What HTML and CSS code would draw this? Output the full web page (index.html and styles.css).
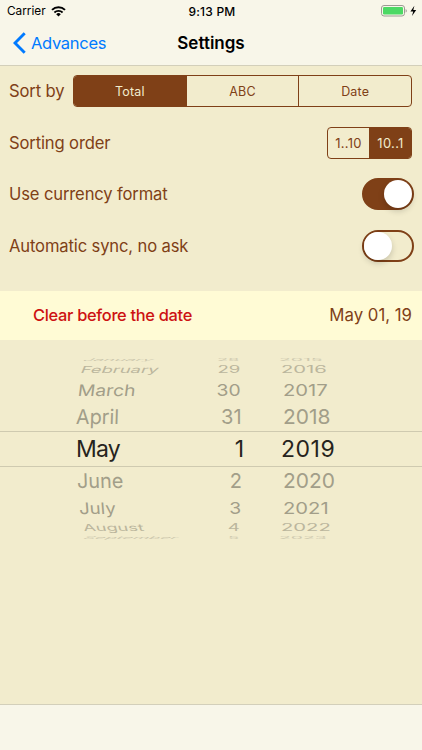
FILE: index.html
```html
<!DOCTYPE html>
<html lang="en">
<head>
    <meta charset="UTF-8">
    <meta name="viewport" content="width=device-width, initial-scale=1.0">
    <title>Settings</title>
    <link rel="stylesheet" href="styles.css">
</head>
<body>
    <header class="header">
        <div class="statusbar">
            <div class="carrier">
                <span>Carrier</span>
                <svg width="15" height="11" viewBox="0 0 15 11">
                    <path d="M1 3.9a9.4 9.4 0 0 1 13 0" fill="none" stroke="#000" stroke-width="2"/>
                    <path d="M3.4 6.5a6 6 0 0 1 8.2 0" fill="none" stroke="#000" stroke-width="1.8"/>
                    <path d="M7.5 10.6 5.2 8.2a3.3 3.3 0 0 1 4.6 0z"/>
                </svg>
            </div>
            <div class="time">9:13 PM</div>
            <div class="power">
                <svg width="36" height="12" viewBox="0 0 36 12">
                    <rect x=".5" y=".5" width="23" height="10.5" rx="2.5" fill="none" stroke="#9c9b93"/>
                    <rect x="2" y="2" width="20" height="7.5" rx="1.2" fill="#4cd964"/>
                    <path d="M24.6 3.9c1.6.5 1.6 3.2 0 3.7z" fill="#9c9b93"/>
                    <path d="M33.4.7 29.4 6.4h2.8l-1.2 4.6 4.2-6.1h-2.9z"/>
                </svg>
            </div>
        </div>
        <nav class="navbar">
            <a class="back">
                <svg width="13" height="22" viewBox="0 0 13 22">
                    <path d="M11.7 1.3 2 11l9.7 9.7" fill="none" stroke="#007aff" stroke-width="2.9"/>
                </svg>
                <span>Advances</span>
            </a>
            <h1>Settings</h1>
        </nav>
    </header>

    <main class="settings">
        <div class="row">
            <label>Sort by</label>
            <div class="segments wide">
                <button class="active">Total</button>
                <button>ABC</button>
                <button>Date</button>
            </div>
        </div>
        <div class="row">
            <label>Sorting order</label>
            <div class="segments small">
                <button>1..10</button>
                <button class="active">10..1</button>
            </div>
        </div>
        <div class="row">
            <label>Use currency format</label>
            <div class="switch on"></div>
        </div>
        <div class="row">
            <label>Automatic sync, no ask</label>
            <div class="switch"></div>
        </div>
    </main>

    <section class="clear">
        <span class="cleartext">Clear before the date</span>
        <span class="cleardate">May 01, 19</span>
    </section>

    <section class="picker">
        <div class="line far up"><span>January</span><span>28</span><span>2015</span></div>
        <div class="line third up"><span>February</span><span>29</span><span>2016</span></div>
        <div class="line second up"><span>March</span><span>30</span><span>2017</span></div>
        <div class="line first up"><span>April</span><span>31</span><span>2018</span></div>
        <div class="line selected"><span>May</span><span>1</span><span>2019</span></div>
        <div class="line first down"><span>June</span><span>2</span><span>2020</span></div>
        <div class="line second down"><span>July</span><span>3</span><span>2021</span></div>
        <div class="line third down"><span>August</span><span>4</span><span>2022</span></div>
        <div class="line far down"><span>September</span><span>5</span><span>2023</span></div>
    </section>

    <footer class="toolbar"></footer>
</body>
</html>
```

FILE: styles.css
```css
* {
    margin: 0;
    padding: 0;
    box-sizing: border-box;
}

body {
    font-family: Inter, "Liberation Sans", sans-serif;
    background: #f2eccd;
    display: flex;
    flex-direction: column;
    height: 750px;
    color: #7f4017;
    overflow: hidden;
}

svg {
    display: block;
}

/* Header */
.header {
    height: 66px;
    background: #f8f6e9;
    border-bottom: 1px solid #d3cfba;
    color: #000;
}

.statusbar {
    height: 22px;
    display: grid;
    grid-template-columns: 1fr 1fr 1fr;
    align-items: center;
    padding: 0 5px 0 7px;
    font-size: 11.8px;
}

.carrier {
    display: flex;
    align-items: center;
    gap: 5px;
}

.time {
    text-align: center;
    font-weight: 500;
    font-size: 12px;
    letter-spacing: 0.2px;
}

.power {
    display: flex;
    justify-content: flex-end;
}

.navbar {
    height: 42px;
    display: grid;
    grid-template-columns: 1fr auto 1fr;
    align-items: center;
    padding: 0 13px;
}

.back {
    display: flex;
    align-items: center;
    gap: 5px;
    color: #007aff;
    font-size: 16.5px;
    letter-spacing: -0.3px;
}

.navbar h1 {
    font-size: 17px;
    font-weight: 600;
}

/* Settings rows */
.settings {
    height: 225px;
    padding: 0 10px 0 9px;
}

.row {
    height: 51.5px;
    display: flex;
    align-items: center;
    justify-content: space-between;
    font-size: 16.6px;
    letter-spacing: -0.14px;
}

.row:first-child {
    height: 50.8px;
}

.segments {
    display: flex;
    height: 32px;
    border: 1px solid #7f4017;
    border-radius: 4px;
    overflow: hidden;
}

.segments button {
    flex: 1;
    border: none;
    border-left: 1px solid #7f4017;
    background: none;
    color: #7f4017;
    font-family: inherit;
    font-size: 12.5px;
    letter-spacing: 0.2px;
}

.segments button:first-child {
    border-left: none;
}

.segments .active {
    background: #7f4017;
    color: #f2eccd;
}

.wide {
    width: 339px;
}

.small {
    width: 85px;
}

.small button {
    font-size: 13px;
    letter-spacing: 0.3px;
}

.switch {
    width: 52px;
    height: 32px;
    margin-right: -2px;
    padding: 1px;
    border: 2px solid #7f4017;
    border-radius: 16px;
    display: flex;
}

.switch::before {
    content: "";
    width: 28px;
    height: 28px;
    margin: -1px;
    border-radius: 50%;
    background: #fff;
    box-shadow: 0 3px 6px rgba(0, 0, 0, 0.18);
}

.switch.on {
    background: #7f4017;
    justify-content: flex-end;
}

/* Clear row */
.clear {
    height: 48.5px;
    background: #fffbd5;
    display: flex;
    align-items: center;
    justify-content: space-between;
    padding: 0 10px 0 33px;
    font-size: 16.8px;
}

.cleartext {
    color: #cd1212;
    font-weight: 500;
    font-size: 16.4px;
    letter-spacing: -0.3px;
}

/* Date picker */
.picker {
    margin-top: 16.5px;
    height: 184px;
    overflow: hidden;
    display: flex;
    flex-direction: column;
    color: #a29e89;
    font-size: 23px;
}

.line {
    flex: none;
    display: grid;
    grid-template-columns: 148px 20px 1fr;
    align-items: center;
    padding-left: 76px;
}

.line span {
    line-height: 0;
    white-space: nowrap;
    justify-self: start;
    transform-origin: left center;
}

.line span:nth-child(2) {
    justify-self: end;
    transform-origin: right center;
}

.line span:nth-child(3) {
    margin-left: 37px;
}

.selected {
    height: 36px;
    border-top: 1px solid #cfcab0;
    border-bottom: 1px solid #cfcab0;
    color: #26241d;
}

.selected span:first-child {
    letter-spacing: -0.8px;
}

.selected span:last-child {
    letter-spacing: 0.5px;
}

.first {
    height: 28px;
}

.second {
    height: 26.4px;
}

.third {
    height: 13px;
    color: #bbb69d;
}

.far {
    height: 7px;
    color: #cdc8ae;
}

.far.up {
    height: 7.5px;
}

/* rows get flatter and lean more as the wheel turns away */
.first span {
    transform: scale(0.86, 0.88) skewX(-2deg);
}

.second span {
    transform: translateX(2px) scale(0.84, 0.69) skewX(-6deg);
}

.third span {
    transform: translateX(5px) scale(0.8, 0.42) skewX(-12deg);
}

.far span {
    transform: translateX(8px) scale(0.79, 0.16) skewX(-20deg);
}

.first.down span {
    transform: translateX(1px) scale(0.86, 0.88) skewX(2deg);
}

.second.down span {
    transform: translateX(3px) scale(0.81, 0.69) skewX(4deg);
}

.third.down span {
    transform: translateX(7px) scale(0.79, 0.42) skewX(8deg);
}

.line.first span:nth-child(2) {
    transform: translateX(-2px) scale(0.87, 0.88);
}

.line.second span:nth-child(2) {
    transform: translateX(-3px) scale(0.84, 0.69);
}

.line.third span:nth-child(2) {
    transform: translateX(-4px) scale(0.81, 0.42);
}

.line.far span:nth-child(2) {
    transform: translateX(-5px) scale(0.79, 0.16);
}

.line.first span:nth-child(3) {
    transform: translateX(2px) scale(0.91, 0.88);
}

.line.second span:nth-child(3) {
    transform: translateX(2px) scale(0.88, 0.69);
}

.line.third span:nth-child(3) {
    transform: scale(0.88, 0.42);
}

.line.far span:nth-child(3) {
    transform: translateX(-2px) scale(0.84, 0.16);
}

/* Bottom toolbar */
.toolbar {
    margin-top: auto;
    height: 46px;
    background: #f8f6e9;
    border-top: 1px solid #d3cfba;
}
```
